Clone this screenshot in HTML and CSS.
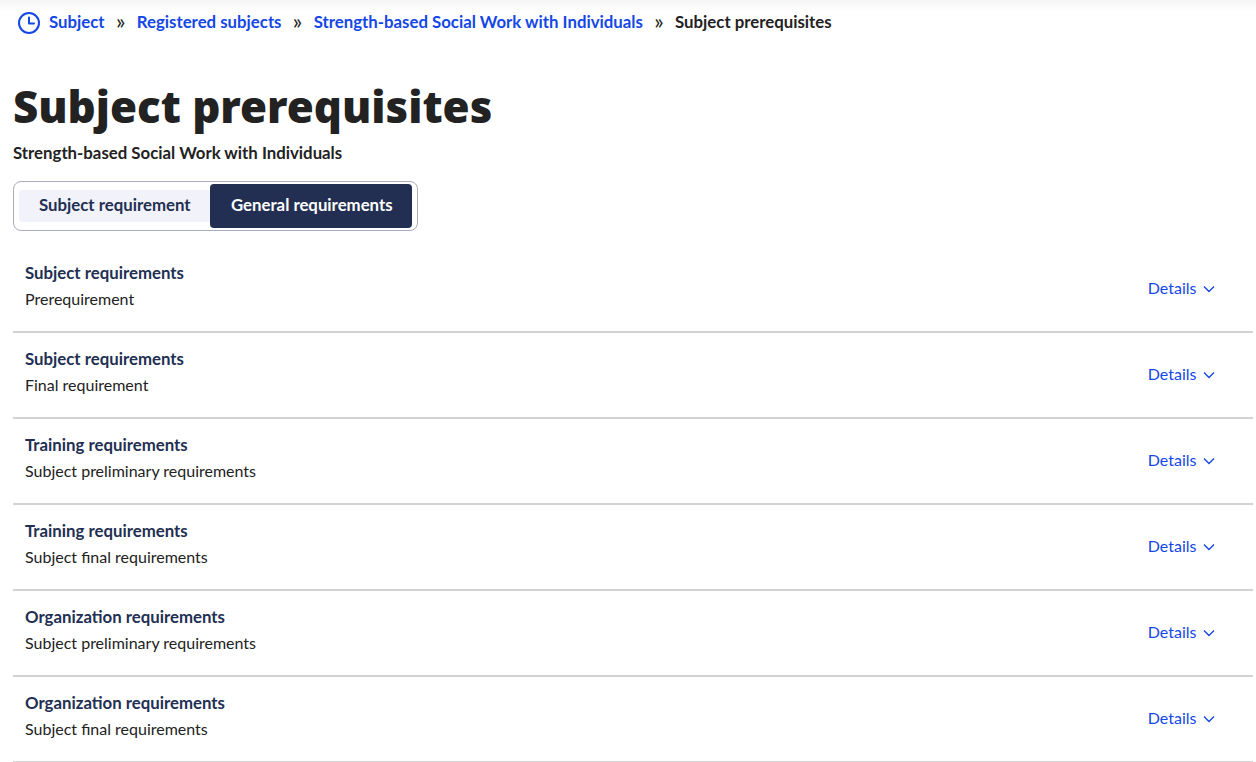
FILE: index.html
```html
<!DOCTYPE html>
<html lang="en">
<head>
    <meta charset="UTF-8">
    <meta name="viewport" content="width=device-width, initial-scale=1.0">
    <title>Subject prerequisites</title>
    <link rel="stylesheet" href="styles.css">
</head>
<body>
    <nav class="breadcrumb">
        <svg class="clock" width="24" height="24" viewBox="0 0 24 24" fill="none" stroke="#1447e6" stroke-width="2" stroke-linecap="round" stroke-linejoin="round">
            <circle cx="12" cy="12" r="10"/>
            <path d="M12 6.5V12.5H17"/>
        </svg>
        <a href="#">Subject</a>
        <span class="sep">»</span>
        <a href="#">Registered subjects</a>
        <span class="sep">»</span>
        <a href="#">Strength-based Social Work with Individuals</a>
        <span class="sep">»</span>
        <span class="current">Subject prerequisites</span>
    </nav>
    <main class="content">
        <h1>Subject prerequisites</h1>
        <p class="subtitle">Strength-based Social Work with Individuals</p>
        <div class="tabs">
            <button class="tab">Subject requirement</button>
            <button class="tab active">General requirements</button>
        </div>
        <ul class="req-list">
            <li class="req-item">
                <div class="req-text"><div class="req-title">Subject requirements</div><div class="req-sub">Prerequirement</div></div>
                <a class="details" href="#"><span class="details-label">Details</span><svg width="14" height="14" viewBox="0 0 14 14" fill="none" stroke="#1447e6" stroke-width="1.4"><path d="M2 4.5L7 9.5L12 4.5"/></svg></a>
            </li>
            <li class="req-item">
                <div class="req-text"><div class="req-title">Subject requirements</div><div class="req-sub">Final requirement</div></div>
                <a class="details" href="#"><span class="details-label">Details</span><svg width="14" height="14" viewBox="0 0 14 14" fill="none" stroke="#1447e6" stroke-width="1.4"><path d="M2 4.5L7 9.5L12 4.5"/></svg></a>
            </li>
            <li class="req-item">
                <div class="req-text"><div class="req-title">Training requirements</div><div class="req-sub">Subject preliminary requirements</div></div>
                <a class="details" href="#"><span class="details-label">Details</span><svg width="14" height="14" viewBox="0 0 14 14" fill="none" stroke="#1447e6" stroke-width="1.4"><path d="M2 4.5L7 9.5L12 4.5"/></svg></a>
            </li>
            <li class="req-item">
                <div class="req-text"><div class="req-title">Training requirements</div><div class="req-sub">Subject final requirements</div></div>
                <a class="details" href="#"><span class="details-label">Details</span><svg width="14" height="14" viewBox="0 0 14 14" fill="none" stroke="#1447e6" stroke-width="1.4"><path d="M2 4.5L7 9.5L12 4.5"/></svg></a>
            </li>
            <li class="req-item">
                <div class="req-text"><div class="req-title">Organization requirements</div><div class="req-sub">Subject preliminary requirements</div></div>
                <a class="details" href="#"><span class="details-label">Details</span><svg width="14" height="14" viewBox="0 0 14 14" fill="none" stroke="#1447e6" stroke-width="1.4"><path d="M2 4.5L7 9.5L12 4.5"/></svg></a>
            </li>
            <li class="req-item">
                <div class="req-text"><div class="req-title">Organization requirements</div><div class="req-sub">Subject final requirements</div></div>
                <a class="details" href="#"><span class="details-label">Details</span><svg width="14" height="14" viewBox="0 0 14 14" fill="none" stroke="#1447e6" stroke-width="1.4"><path d="M2 4.5L7 9.5L12 4.5"/></svg></a>
            </li>
        </ul>
    </main>
</body>
</html>
```

FILE: styles.css
```css
body {
    font-family: Lato, sans-serif;
    margin: 0;
    padding: 0;
    background-color: #fff;
    color: #222;
    overflow: hidden;
}
.breadcrumb {
    display: flex;
    align-items: center;
    height: 44px;
    padding: 2px 0 0 17px;
    box-sizing: border-box;
    font-size: 16.8px;
    font-weight: 700;
    background: linear-gradient(#f6f6f6, #fff 12px);
}
.breadcrumb a {
    color: #1447e6;
    text-decoration: none;
    margin-bottom: 4px;
}
.clock {
    margin-right: 8px;
}
.sep {
    width: 32.2px;
    text-align: center;
    font-weight: 400;
    font-size: 22px;
    line-height: 16px;
    margin-bottom: 4px;
}
.current {
    color: #222;
    margin-bottom: 4px;
}
.content {
    padding: 0 3px 0 13px;
}
h1 {
    margin: 31px 0 0;
    font-family: "Noto Sans", sans-serif;
    font-size: 43.8px;
    line-height: 62px;
    font-weight: 900;
    color: #222;
}
.subtitle {
    margin: 5px 0 0;
    font-size: 16.8px;
    line-height: 22px;
    font-weight: 700;
}
.tabs {
    display: inline-flex;
    align-items: center;
    margin-top: 17px;
    padding: 2px 5px;
    border: 1px solid #a9adbb;
    border-radius: 8px;
}
.tab {
    font-family: Lato, sans-serif;
    font-size: 16.8px;
    font-weight: 700;
    border: none;
    height: 32px;
    padding: 0 19.5px 3px 20px;
    border-radius: 4px 0 0 4px;
    background-color: #f1f2fa;
    color: #222f52;
}
.tab.active {
    height: 44px;
    padding: 0 19px 3px 21px;
    border-radius: 4px;
    background-color: #222f52;
    color: #fff;
}
.req-list {
    list-style: none;
    margin: 16px 0 0;
    padding: 0;
}
.req-item {
    display: flex;
    align-items: center;
    justify-content: space-between;
    height: 86px;
    box-sizing: border-box;
    padding: 0 37px 0 12px;
    border-bottom: 2px solid #d2d2d2;
}
.req-text {
    margin-bottom: 6px;
}
.req-title {
    font-size: 16.8px;
    line-height: 26px;
    font-weight: 700;
    color: #222f52;
}
.req-sub {
    font-size: 16px;
    line-height: 26px;
}
.details {
    display: flex;
    align-items: center;
    gap: 5.5px;
    color: #1447e6;
    font-size: 16px;
    text-decoration: none;
}
.details-label {
    margin-bottom: 4px;
}
```
